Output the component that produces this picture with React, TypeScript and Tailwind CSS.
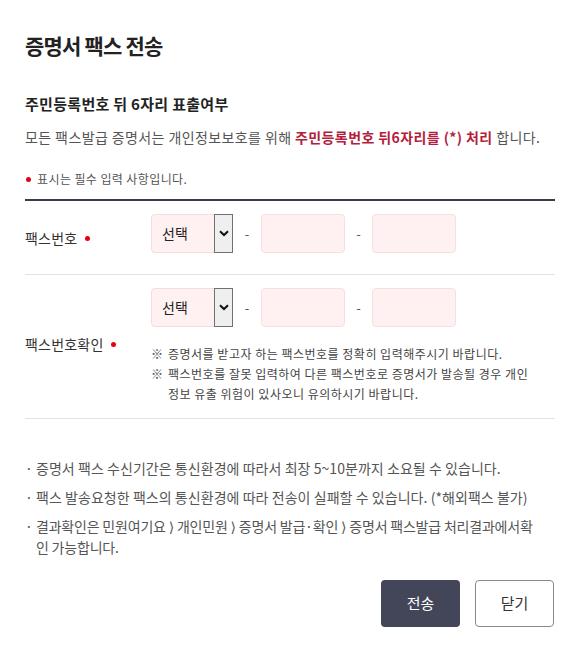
import React from "react";

const font = { fontFamily: '"Noto Sans CJK KR", "Noto Sans", sans-serif' };

function SelectBox() {
  return (
    <div className="flex h-[39px] w-[82px] items-stretch rounded-l-[4px] border border-[#f6dcdc] bg-[#fff1f1]">
      <div className="flex flex-1 items-center pl-[10px] text-[14px] text-[#222]">선택</div>
      <div className="-my-px -mr-px flex w-[19px] items-center justify-center border border-[#707070] bg-[#efefef]">
        <svg width="10" height="7" viewBox="0 0 10 7">
          <path d="M1 1.2 L5 5 L9 1.2" fill="none" stroke="#111" strokeWidth="2" />
        </svg>
      </div>
    </div>
  );
}

function InputBox() {
  return <div className="h-[39px] w-[84px] rounded-[4px] border border-[#f8dede] bg-[#fff1f1]" />;
}

function PhoneInputs() {
  return (
    <div className="flex items-center">
      <SelectBox />
      <div className="w-[28px] text-center text-[13px] text-[#555]">-</div>
      <InputBox />
      <div className="w-[27px] text-center text-[13px] text-[#555]">-</div>
      <InputBox />
    </div>
  );
}

function RedDot() {
  return <span className="inline-block h-[5px] w-[5px] rounded-full bg-[#e60012]" />;
}

function Arrow() {
  return (
    <>
      {" "}
      <span className="font-['DejaVu_Sans',sans-serif]">⟩</span>{" "}
    </>
  );
}

export default function App() {
  return (
    <div className="min-h-[647px] w-[582px] bg-white pl-[25px] pr-[27px]" style={font}>
      <h1 className="pt-[30px] text-[21px] font-bold leading-[30px] text-[#222] tracking-[-0.8px]">증명서 팩스 전송</h1>

      <h2 className="mt-[33px] text-[15px] font-bold leading-[22px] text-[#222] tracking-[0.3px]">
        주민등록번호 뒤 6자리 표출여부
      </h2>
      <p className="mt-[11px] text-[14px] leading-[22px] text-[#555] tracking-[0.4px]">
        모든 팩스발급 증명서는 개인정보보호를 위해{" "}
        <span className="font-bold text-[#b51d3c]">주민등록번호 뒤6자리를 (*) 처리</span> 합니다.
      </p>

      <div className="mt-[22px] flex items-center gap-[6px] pl-[1px] text-[12px] leading-[18px] text-[#555] tracking-[0.4px]">
        <RedDot />
        <span>표시는 필수 입력 사항입니다.</span>
      </div>

      <div className="mt-[11px] h-[2px] bg-[#3a3b45]" />

      <div className="flex border-b border-[#e3e3e3]">
        <div className="flex w-[126px] items-center gap-[8px] pt-[1px] text-[14px] text-[#333] tracking-[0.2px]">
          <span>팩스번호</span>
          <RedDot />
        </div>
        <div className="pb-[21px] pt-[13px]">
          <PhoneInputs />
        </div>
      </div>

      <div className="flex border-b border-[#e3e3e3]">
        <div className="flex w-[126px] items-center gap-[8px] pb-[4px] text-[14px] text-[#333] tracking-[0.2px]">
          <span>팩스번호확인</span>
          <RedDot />
        </div>
        <div className="pb-[14px] pt-[13px]">
          <PhoneInputs />
          <div className="mt-[17px] text-[12px] leading-[20px] text-[#444] tracking-[0.5px]">
            <div className="flex">
              <span className="w-[17px] shrink-0">※</span>
              <span>증명서를 받고자 하는 팩스번호를 정확히 입력해주시기 바랍니다.</span>
            </div>
            <div className="flex">
              <span className="w-[17px] shrink-0">※</span>
              <span className="whitespace-nowrap">
                팩스번호를 잘못 입력하여 다른 팩스번호로 증명서가 발송될 경우 개인
                <br />
                정보 유출 위험이 있사오니 유의하시기 바랍니다.
              </span>
            </div>
          </div>
        </div>
      </div>

      <ul className="mt-[39px] flex flex-col gap-[9px] text-[14px] leading-[20px] text-[#555] tracking-[0.05px]">
        <li className="flex">
          <span className="w-[11px] shrink-0">·</span>
          <span className="whitespace-nowrap">증명서 팩스 수신기간은 통신환경에 따라서 최장 5~10분까지 소요될 수 있습니다.</span>
        </li>
        <li className="flex">
          <span className="w-[11px] shrink-0">·</span>
          <span className="whitespace-nowrap">팩스 발송요청한 팩스의 통신환경에 따라 전송이 실패할 수 있습니다. (*해외팩스 불가)</span>
        </li>
        <li className="flex">
          <span className="w-[11px] shrink-0">·</span>
          <span className="whitespace-nowrap tracking-[-0.2px]">
            결과확인은 민원여기요<Arrow />개인민원<Arrow />증명서 발급·확인<Arrow />증명서 팩스발급 처리결과에서확
            <br />
            인 가능합니다.
          </span>
        </li>
      </ul>

      <div className="mt-[23px] flex justify-end gap-[15px] pb-[20px] pr-[1px]">
        <button className="flex h-[47px] w-[79px] items-center justify-center rounded-[4px] bg-[#434659] text-[15px] text-white">
          전송
        </button>
        <button className="flex h-[47px] w-[79px] items-center justify-center rounded-[4px] border border-[#8a8a8a] bg-white text-[15px] text-[#333]">
          닫기
        </button>
      </div>
    </div>
  );
}
